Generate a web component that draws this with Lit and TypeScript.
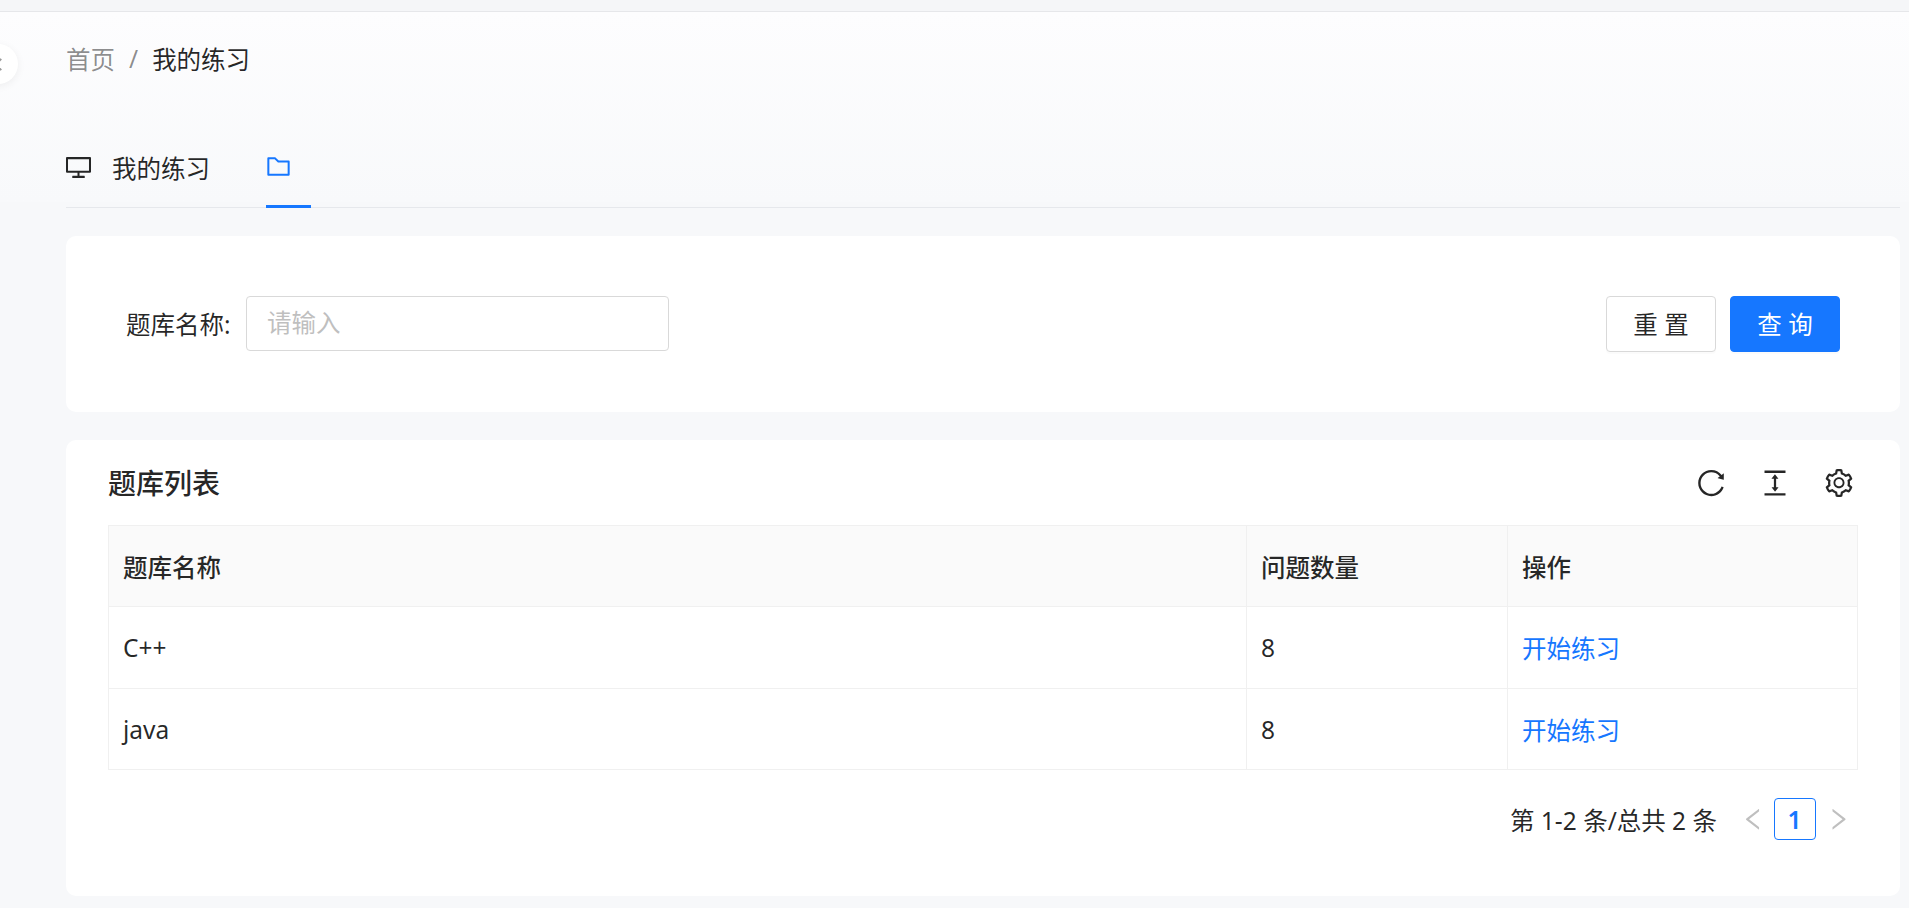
import { LitElement, html, css, svg } from "lit";
import { customElement, state } from "lit/decorators.js";

/* ── Icons ───────────────────────────────────────────────────────────── */

const ICONS = {
  desktop:
    "M928 140H96c-17.7 0-32 14.3-32 32v496c0 17.7 14.3 32 32 32h380v112H304c-8.8 0-16 7.2-16 16v48c0 4.4 3.6 8 8 8h432c4.4 0 8-3.6 8-8v-48c0-8.8-7.2-16-16-16H548V700h380c17.7 0 32-14.3 32-32V172c0-17.7-14.3-32-32-32zm-40 488H136V212h752v416z",
  folder:
    "M880 298.4H521L403.7 186.2a8.15 8.15 0 00-5.5-2.2H144c-17.7 0-32 14.3-32 32v592c0 17.7 14.3 32 32 32h736c17.7 0 32-14.3 32-32V330.4c0-17.7-14.3-32-32-32zM840 768H184V256h188.5l119.6 114.4H840V768z",
  reload:
    "M909.1 209.3l-56.4 44.1C775.8 155.1 656.2 92 521.9 92 290 92 102.3 279.5 102 511.5 101.7 743.7 289.8 932 521.9 932c181.3 0 335.8-115 394.6-276.1 1.5-4.2-.7-8.9-4.9-10.3l-56.7-19.5a8 8 0 00-10.1 4.8c-1.8 5-3.8 10-5.9 14.9-17.3 41-42.1 77.8-73.7 109.4A344.77 344.77 0 01655.9 829c-42.3 17.9-87.4 27-133.8 27-46.5 0-91.5-9.1-133.8-27A341.5 341.5 0 01279 755.2a342.16 342.16 0 01-73.7-109.4c-17.9-42.4-27-87.4-27-133.9s9.1-91.5 27-133.9c17.3-41 42.1-77.8 73.7-109.4 31.6-31.6 68.4-56.4 109.3-73.8 42.3-17.9 87.4-27 133.8-27 46.5 0 91.5 9.1 133.8 27a341.5 341.5 0 01109.3 73.8c9.9 9.9 19.2 20.4 27.8 31.4l-60.2 47a8 8 0 003 14.1l175.6 43c5 1.2 9.9-2.6 9.9-7.7l.8-180.9c-.1-6.6-7.8-10.3-13-6.2z",
  columnHeight:
    "M840 836H184c-4.4 0-8 3.6-8 8v60c0 4.4 3.6 8 8 8h656c4.4 0 8-3.6 8-8v-60c0-4.4-3.6-8-8-8zm0-724H184c-4.4 0-8 3.6-8 8v60c0 4.4 3.6 8 8 8h656c4.4 0 8-3.6 8-8v-60c0-4.4-3.6-8-8-8zM610.8 378c6 0 9.4-7 5.7-11.7L515.7 238.7a7.14 7.14 0 00-11.3 0L403.6 366.3a7.18 7.18 0 005.7 11.7H476v268h-62.8c-6 0-9.4 7-5.7 11.7l100.8 127.5c2.9 3.7 8.5 3.7 11.3 0l100.8-127.5c3.7-4.7.4-11.7-5.7-11.7H548V378h62.8z",
  setting:
    "M924.8 625.7l-65.5-56c3.1-19 4.7-38.4 4.7-57.8s-1.6-38.8-4.7-57.8l65.5-56a32.03 32.03 0 009.3-35.2l-.9-2.6a443.74 443.74 0 00-79.7-137.9l-1.8-2.1a32.12 32.12 0 00-35.1-9.5l-81.3 28.9c-30-24.6-63.5-44-99.7-57.6l-15.7-85a32.05 32.05 0 00-25.8-25.7l-2.7-.5c-52.1-9.4-106.9-9.4-159 0l-2.7.5a32.05 32.05 0 00-25.8 25.7l-15.8 85.4a351.86 351.86 0 00-99 57.4l-81.9-29.1a32 32 0 00-35.1 9.5l-1.8 2.1a446.02 446.02 0 00-79.7 137.9l-.9 2.6c-4.5 12.5-.8 26.5 9.3 35.2l66.3 56.6c-3.1 18.8-4.6 38-4.6 57.1 0 19.2 1.5 38.4 4.6 57.1L99 625.5a32.03 32.03 0 00-9.3 35.2l.9 2.6c18.1 50.4 44.9 96.9 79.7 137.9l1.8 2.1a32.12 32.12 0 0035.1 9.5l81.9-29.1c29.8 24.5 63.1 43.9 99 57.4l15.8 85.4a32.05 32.05 0 0025.8 25.7l2.7.5a449.4 449.4 0 00159 0l2.7-.5a32.05 32.05 0 0025.8-25.7l15.7-85a350 350 0 0099.7-57.6l81.3 28.9a32 32 0 0035.1-9.5l1.8-2.1c34.8-41.1 61.6-87.5 79.7-137.9l.9-2.6c4.5-12.3.8-26.3-9.3-35zM788.3 465.9c2.5 15.1 3.8 30.6 3.8 46.1s-1.3 31-3.8 46.1l-6.6 40.1 74.7 63.9a370.03 370.03 0 01-42.6 73.6L721 702.8l-31.4 25.8c-23.9 19.6-50.5 35-79.3 45.8l-38.1 14.3-17.9 97a377.5 377.5 0 01-85 0l-17.9-97.2-37.8-14.5c-28.5-10.8-55-26.2-78.7-45.7l-31.4-25.9-93.4 33.2c-17-22.9-31.2-47.6-42.6-73.6l75.5-64.5-6.5-40c-2.4-14.9-3.7-30.3-3.7-45.5 0-15.3 1.2-30.6 3.7-45.5l6.5-40-75.5-64.5c11.3-26.1 25.6-50.7 42.6-73.6l93.4 33.2 31.4-25.9c23.7-19.5 50.2-34.9 78.7-45.7l37.9-14.3 17.9-97.2c28.1-3.2 56.8-3.2 85 0l17.9 97 38.1 14.3c28.7 10.8 55.4 26.2 79.3 45.8l31.4 25.8 92.8-32.9c17 22.9 31.2 47.6 42.6 73.6L781.8 426l6.5 39.9zM512 326c-97.2 0-176 78.8-176 176s78.8 176 176 176 176-78.8 176-176-78.8-176-176-176zm83 259c-22.2 22.1-51.6 34.3-83 34.3s-60.8-12.2-83-34.3c-22.1-22.2-34.3-51.6-34.3-83s12.2-60.8 34.3-83c22.2-22.2 51.6-34.3 83-34.3s60.8 12.1 83 34.3c22.1 22.2 34.3 51.6 34.3 83s-12.2 60.8-34.3 83z",
  left: "M724 218.3V141c0-6.7-7.7-10.4-12.9-6.3L260.3 486.8a31.86 31.86 0 000 50.3l450.8 352.1c5.3 4.1 12.9.4 12.9-6.3v-77.3c0-4.9-2.3-9.6-6.1-12.6l-360-281 360-281.1c3.8-3 6.1-7.7 6.1-12.6z",
  right:
    "M765.7 486.8L314.9 134.7A7.97 7.97 0 00302 141v77.3c0 4.9 2.3 9.6 6.1 12.6l360 281.1-360 281.1c-3.9 3-6.1 7.7-6.1 12.6V883c0 6.7 7.7 10.4 12.9 6.3l450.8-352.1a31.96 31.96 0 000-50.4z",
};

function icon(name: keyof typeof ICONS, size: number) {
  return html`<svg
    class="icon"
    width=${size}
    height=${size}
    viewBox="64 64 896 896"
    fill="currentColor"
  >
    ${svg`<path d=${ICONS[name]}></path>`}
  </svg>`;
}

/* ── Data ────────────────────────────────────────────────────────────── */

const BANKS = [
  { name: "C++", count: 8 },
  { name: "java", count: 8 },
];

/* ── Component ───────────────────────────────────────────────────────── */

@customElement("app-root")
export class AppRoot extends LitElement {
  @state() private _query = "";

  static styles = css`
    :host {
      display: block;
      height: 908px;
      overflow: hidden;
      position: relative;
      box-sizing: border-box;
      font-family: "Noto Sans", "Noto Sans CJK SC", sans-serif;
      font-size: 24.5px;
      color: rgba(0, 0, 0, 0.85);
      background: #f7f8fa;
    }

    * {
      box-sizing: border-box;
    }

    .icon {
      display: block;
      flex: none;
    }

    .topbar {
      height: 12px;
      background: #f5f6f8;
      border-bottom: 1px solid #e6e7ea;
    }

    .shade {
      height: 190px;
      margin-bottom: -190px;
      background: linear-gradient(#fdfdfe, #f8f9fb);
    }

    .collapse {
      position: absolute;
      left: -22px;
      top: 44px;
      width: 40px;
      height: 40px;
      border-radius: 50%;
      background: #fff;
      box-shadow: 0 2px 8px rgba(0, 0, 0, 0.06);
    }

    .collapse::after {
      content: "";
      position: absolute;
      left: 18px;
      top: 16px;
      width: 7px;
      height: 7px;
      border-left: 2px solid #999;
      border-bottom: 2px solid #999;
      transform: rotate(45deg);
    }

    .content {
      position: relative;
      padding: 0 9px 0 66px;
    }

    .crumbs {
      display: flex;
      align-items: center;
      height: 36px;
      margin-top: 28px;
      color: rgba(0, 0, 0, 0.45);
    }

    .crumbs .sep {
      margin: 0 14px;
    }

    .crumbs .current {
      color: rgba(0, 0, 0, 0.85);
    }

    .tabs {
      display: flex;
      height: 77px;
      margin-top: 55px;
      border-bottom: 1px solid #e6e8ec;
    }

    .tab {
      display: flex;
      align-items: center;
      gap: 21px;
      height: 77px;
      padding-bottom: 4px;
    }

    .tab.active {
      margin-left: 56px;
      width: 45px;
      color: #1677ff;
      border-bottom: 3px solid #1677ff;
    }

    .card {
      background: #fff;
      border-radius: 10px;
    }

    .search {
      display: flex;
      align-items: flex-start;
      height: 176px;
      margin-top: 28px;
      padding: 60px 60px 0 60px;
    }

    .search label {
      display: flex;
      align-items: center;
      width: 120px;
      height: 54px;
      white-space: nowrap;
    }

    .search input {
      width: 423px;
      height: 55px;
      padding: 0 20px 2px;
      border: 1px solid #d9d9d9;
      border-radius: 4px;
      outline: none;
      font: inherit;
      color: inherit;
      background: #fff;
    }

    .search input::placeholder {
      color: #bfbfbf;
    }

    .actions {
      display: flex;
      gap: 14px;
      margin-left: auto;
    }

    .btn {
      width: 110px;
      height: 56px;
      padding: 0 0 2px;
      border: 1px solid #d9d9d9;
      border-radius: 4px;
      font: inherit;
      letter-spacing: 6.5px;
      text-indent: 6.5px;
      color: inherit;
      background: #fff;
      box-shadow: 0 2px 0 rgba(0, 0, 0, 0.015);
    }

    .btn.primary {
      border-color: #1677ff;
      color: #fff;
      background: #1677ff;
    }

    .list {
      height: 456px;
      margin-top: 28px;
      padding: 0 42px;
    }

    .list-head {
      display: flex;
      align-items: center;
      height: 85px;
    }

    .list-head h2 {
      margin: 0 0 2px;
      font-size: 28px;
      font-weight: 500;
    }

    .tools {
      display: flex;
      gap: 36px;
      margin-left: auto;
      margin-right: 5px;
    }

    table {
      width: 100%;
      table-layout: fixed;
      border-collapse: separate;
      border-spacing: 0;
      border-top: 1px solid #f0f0f0;
      border-left: 1px solid #f0f0f0;
    }

    th,
    td {
      height: 81px;
      padding: 0 14px;
      text-align: left;
      font-weight: 400;
      border-right: 1px solid #f0f0f0;
      border-bottom: 1px solid #f0f0f0;
    }

    tbody tr:first-child td {
      height: 82px;
    }

    th {
      font-weight: 500;
      background: #fafafa;
    }

    td a {
      color: #1677ff;
      text-decoration: none;
    }

    .pager {
      display: flex;
      align-items: center;
      height: 42px;
      margin-top: 28px;
      padding-right: 8px;
      justify-content: flex-end;
    }

    .pager .total {
      margin-right: 24px;
    }

    .pager .arrow {
      color: #bfbfbf;
    }

    .pager .page {
      display: flex;
      align-items: center;
      justify-content: center;
      width: 42px;
      height: 42px;
      margin: 0 10px 0 8px;
      border: 1px solid #1677ff;
      border-radius: 4px;
      font-weight: 600;
      color: #1677ff;
    }
  `;

  render() {
    return html`
      <div class="topbar"></div>
      <div class="shade"></div>
      <div class="collapse"></div>
      <div class="content">
        <div class="crumbs">
          <span>首页</span><span class="sep">/</span
          ><span class="current">我的练习</span>
        </div>
        <div class="tabs">
          <div class="tab">${icon("desktop", 25)}<span>我的练习</span></div>
          <div class="tab active">${icon("folder", 25)}</div>
        </div>
        <div class="card search">
          <label>题库名称:</label>
          <input
            placeholder="请输入"
            .value=${this._query}
            @input=${(e: Event) =>
              (this._query = (e.target as HTMLInputElement).value)}
          />
          <div class="actions">
            <button class="btn">重置</button>
            <button class="btn primary">查询</button>
          </div>
        </div>
        <div class="card list">
          <div class="list-head">
            <h2>题库列表</h2>
            <div class="tools">
              ${icon("reload", 28)} ${icon("columnHeight", 28)}
              ${icon("setting", 28)}
            </div>
          </div>
          <table>
            <colgroup>
              <col style="width: 1138px" />
              <col style="width: 261px" />
              <col />
            </colgroup>
            <thead>
              <tr>
                <th>题库名称</th>
                <th>问题数量</th>
                <th>操作</th>
              </tr>
            </thead>
            <tbody>
              ${BANKS.map(
                (b) => html`<tr>
                  <td>${b.name}</td>
                  <td>${b.count}</td>
                  <td><a href="#">开始练习</a></td>
                </tr>`,
              )}
            </tbody>
          </table>
          <div class="pager">
            <span class="total">第 1-2 条/总共 2 条</span>
            <span class="arrow">${icon("left", 24.5)}</span>
            <span class="page">1</span>
            <span class="arrow">${icon("right", 24.5)}</span>
          </div>
        </div>
      </div>
    `;
  }
}

declare global {
  interface HTMLElementTagNameMap {
    "app-root": AppRoot;
  }
}
